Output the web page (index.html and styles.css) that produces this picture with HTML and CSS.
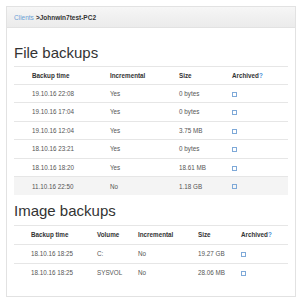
FILE: index.html
```html
<!DOCTYPE html>
<html lang="en">
<head>
	<meta charset="UTF-8">
	<title>Backups - Johnwin7test-PC2</title>
	<link rel="stylesheet" href="styles.css">
</head>
<body>
	<div class="panel">
		<div class="panel-heading">
			<a href="#" class="crumb">Clients</a> <span class="crumb-current">&gt;Johnwin7test-PC2</span>
		</div>
		<div class="panel-body">
			<h2 class="section-title first">File backups</h2>
			<table class="backups file-backups">
				<thead>
					<tr>
						<th class="c-time">Backup time</th>
						<th class="c-incr">Incremental</th>
						<th class="c-size">Size</th>
						<th class="c-arch">Archived<span class="help">?</span></th>
					</tr>
				</thead>
				<tbody>
					<tr><td>19.10.16 22:08</td><td>Yes</td><td>0 bytes</td><td><span class="check"></span></td></tr>
					<tr><td>19.10.16 17:04</td><td>Yes</td><td>0 bytes</td><td><span class="check"></span></td></tr>
					<tr><td>19.10.16 12:04</td><td>Yes</td><td>3.75 MB</td><td><span class="check"></span></td></tr>
					<tr><td>18.10.16 23:21</td><td>Yes</td><td>0 bytes</td><td><span class="check"></span></td></tr>
					<tr><td>18.10.16 18:20</td><td>Yes</td><td>18.61 MB</td><td><span class="check"></span></td></tr>
					<tr class="full"><td>11.10.16 22:50</td><td>No</td><td>1.18 GB</td><td><span class="check"></span></td></tr>
				</tbody>
			</table>

			<h2 class="section-title">Image backups</h2>
			<table class="backups image-backups">
				<thead>
					<tr>
						<th class="c-time">Backup time</th>
						<th class="c-vol">Volume</th>
						<th class="c-incr">Incremental</th>
						<th class="c-size">Size</th>
						<th class="c-arch">Archived<span class="help">?</span></th>
					</tr>
				</thead>
				<tbody>
					<tr><td>18.10.16 18:25</td><td>C:</td><td>No</td><td>19.27 GB</td><td><span class="check"></span></td></tr>
					<tr><td>18.10.16 18:25</td><td>SYSVOL</td><td>No</td><td>28.06 MB</td><td><span class="check"></span></td></tr>
				</tbody>
			</table>
		</div>
	</div>
</body>
</html>
```

FILE: styles.css
```css
body {
	margin: 0;
	padding: 6px;
	background-color: #fff;
	font-family: "Liberation Sans", Arial, sans-serif;
	color: #555;
}
.panel {
	width: 290px;
	height: 291px;
	box-sizing: border-box;
	border: 1px solid #e2e2e2;
	background-color: #fff;
}
.panel-heading {
	height: 21px;
	box-sizing: border-box;
	padding: 0 7px;
	display: flex;
	align-items: center;
	gap: 2px;
	font-size: 6.5px;
	background: linear-gradient(to bottom, #f6f6f6, #ebebeb);
	border-bottom: 1px solid #e2e2e2;
}
.crumb {
	color: #6a9fd6;
	text-decoration: none;
}
.crumb-current {
	color: #333;
	font-weight: bold;
}
.panel-body {
	padding: 0 7px;
}
.section-title {
	margin: 7px 0 0;
	padding-bottom: 6px;
	font-size: 15px;
	font-weight: normal;
	line-height: 17px;
	color: #333;
	border-bottom: 1px solid #e6e6e6;
}
.section-title.first {
	margin-top: 16px;
	padding-bottom: 5px;
}
.backups {
	width: 274px;
	border-collapse: collapse;
	table-layout: fixed;
	font-size: 6.3px;
}
.backups th,
.backups td {
	box-sizing: border-box;
	padding: 0;
	text-align: left;
}
.backups th {
	height: 17px;
	font-weight: bold;
	color: #333;
	border-bottom: 1px solid #e6e6e6;
}
.image-backups th {
	height: 18px;
}
.backups td {
	height: 18.5px;
	border-top: 1px solid #e6e6e6;
}
.image-backups td {
	height: 19px;
}
.backups th:first-child,
.backups td:first-child {
	padding-left: 18px;
}
.backups tbody tr:first-child td {
	border-top: none;
}
.backups tr.full td {
	background-color: #f4f4f4;
}
.file-backups .c-time { width: 96px; }
.file-backups .c-incr { width: 69px; }
.file-backups .c-size { width: 53px; }
.file-backups .c-arch { width: 56px; }
.image-backups th:first-child,
.image-backups td:first-child {
	padding-left: 17px;
}
.image-backups .c-time { width: 83px; }
.image-backups .c-vol { width: 41px; }
.image-backups .c-incr { width: 60px; }
.image-backups .c-size { width: 43px; }
.image-backups .c-arch { width: 47px; }
.help {
	color: #4a90d9;
}
.check {
	display: inline-block;
	width: 3px;
	height: 3px;
	border: 1px solid #7ea9d8;
	vertical-align: middle;
}
```
